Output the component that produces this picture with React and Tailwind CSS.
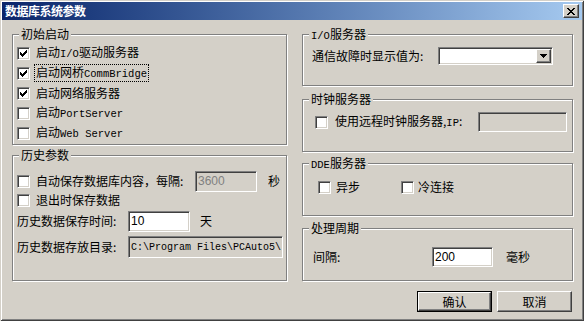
import React from 'react';

const sunken =
  'border border-t-[#808080] border-l-[#808080] border-b-white border-r-white shadow-[inset_1px_1px_0_#404040,inset_-1px_-1px_0_#d4d0c8]';
const raised =
  'border border-t-white border-l-white border-b-[#404040] border-r-[#404040] shadow-[inset_-1px_-1px_0_#808080,inset_1px_1px_0_#d4d0c8]';

function M({ children }) {
  return <span className="font-['Liberation_Mono',monospace] text-[10.5px]">{children}</span>;
}

function Check({ checked }) {
  return (
    <span className={`w-[13px] h-[13px] shrink-0 bg-white ${sunken}`}>
      {checked && (
        <svg width="11" height="11" viewBox="0 0 11 11" className="block" shapeRendering="crispEdges">
          <path
            fill="#000"
            d="M2 4h1v3h-1z M3 5h1v3h-1z M4 6h1v3h-1z M5 5h1v3h-1z M6 4h1v3h-1z M7 3h1v3h-1z M8 2h1v3h-1z"
          />
        </svg>
      )}
    </span>
  );
}

function Group({ title, className, children }) {
  return (
    <div className={`relative border border-[#808080] shadow-[inset_1px_1px_0_#fff,1px_1px_0_#fff] ${className}`}>
      <span className="absolute -top-[8px] left-[6px] px-[2px] bg-[#d4d0c8] leading-[14px] whitespace-nowrap">
        {title}
      </span>
      {children}
    </div>
  );
}

function CheckRow({ checked, focus, children }) {
  return (
    <div className="h-[20px] flex items-center">
      <Check checked={checked} />
      <span
        className={`ml-[5px] px-[1px] leading-[14px] whitespace-nowrap ${
          focus ? 'outline-1 outline-dotted outline-black' : ''
        }`}
      >
        {children}
      </span>
    </div>
  );
}

export default function App() {
  return (
    <div className="w-[584px] h-[321px] bg-[#d4d0c8] p-[2px] flex flex-col overflow-hidden text-[12px] text-black font-['Noto_Sans_CJK_SC',sans-serif] shadow-[inset_1px_1px_0_#d4d0c8,inset_-1px_-1px_0_#404040,inset_2px_2px_0_#fff,inset_-2px_-2px_0_#808080]">
      {/* Title bar */}
      <div className="h-[18px] shrink-0 flex items-center justify-between bg-gradient-to-r from-[#0a246a] to-[#a6caf0]">
        <span className="pl-[3px] text-white font-bold leading-[14px] tracking-[-0.5px]">数据库系统参数</span>
        <span className={`mr-[3px] w-[16px] h-[14px] bg-[#d4d0c8] flex items-center justify-center ${raised}`}>
          <svg width="8" height="7" viewBox="0 0 8 7" className="block" shapeRendering="crispEdges">
            <path
              fill="#000"
              d="M0 0h2v1h-2z M6 0h2v1h-2z M1 1h2v1h-2z M5 1h2v1h-2z M2 2h4v1h-4z M3 3h2v1h-2z M2 4h4v1h-4z M1 5h2v1h-2z M5 5h2v1h-2z M0 6h2v1h-2z M6 6h2v1h-2z"
            />
          </svg>
        </span>
      </div>

      {/* Body */}
      <div className="flex-1 flex pl-[10px] pt-[14px] gap-[15px]">
        {/* Left column */}
        <div className="w-[275px] flex flex-col">
          <Group title="初始启动" className="h-[111px] pl-[4px] pt-[8px]">
            <CheckRow checked>
              启动<M>I/O</M>驱动服务器
            </CheckRow>
            <CheckRow checked focus>
              启动网桥<M>CommBridge</M>
            </CheckRow>
            <CheckRow checked>启动网络服务器</CheckRow>
            <CheckRow>
              启动<M>PortServer</M>
            </CheckRow>
            <CheckRow>
              启动<M>Web Server</M>
            </CheckRow>
          </Group>

          <Group title="历史参数" className="mt-[10px] h-[126px] pl-[4px] pt-[14px]">
            <div className="h-[22px] flex items-center">
              <Check />
              <span className="ml-[6px] w-[159px] leading-[14px] whitespace-nowrap">自动保存数据库内容，每隔:</span>
              <span
                className={`w-[62px] h-[21px] flex items-center pl-[2px] text-[#808080] font-['Liberation_Sans',sans-serif] ${sunken}`}
              >
                3600
              </span>
              <span className="ml-[11px] leading-[14px]">秒</span>
            </div>
            <div className="h-[16px] flex items-center">
              <Check />
              <span className="ml-[6px] leading-[14px]">退出时保存数据</span>
            </div>
            <div className="mt-[2px] h-[22px] flex items-center">
              <span className="w-[111px] leading-[14px] whitespace-nowrap">历史数据保存时间:</span>
              <span
                className={`w-[62px] h-[21px] bg-white flex items-center pl-[2px] font-['Liberation_Sans',sans-serif] ${sunken}`}
              >
                10
              </span>
              <span className="ml-[10px] leading-[14px]">天</span>
            </div>
            <div className="mt-[4px] h-[22px] flex items-center">
              <span className="w-[111px] leading-[14px] whitespace-nowrap">历史数据存放目录:</span>
              <span
                className={`w-[155px] h-[22px] flex items-center pl-[2px] overflow-hidden whitespace-nowrap font-['Liberation_Mono',monospace] text-[10px] ${sunken}`}
              >
                C:\Program Files\PCAuto5\
              </span>
            </div>
          </Group>
        </div>

        {/* Right column */}
        <div className="w-[271px] flex flex-col">
          <Group
            title={
              <>
                <M>I/O</M>服务器
              </>
            }
            className="h-[52px] pl-[9px] pt-[12px]"
          >
            <div className="h-[18px] flex items-center">
              <span className="w-[126px] leading-[14px] whitespace-nowrap">通信故障时显示值为:</span>
              <span className={`w-[115px] h-[18px] bg-white flex justify-end items-center pr-[1px] ${sunken}`}>
                <span className={`w-[15px] h-[14px] bg-[#d4d0c8] flex items-center justify-center ${raised}`}>
                  <svg width="7" height="4" viewBox="0 0 7 4" className="block" shapeRendering="crispEdges">
                    <path fill="#000" d="M0 0h7v1h-7z M1 1h5v1h-5z M2 2h3v1h-3z M3 3h1v1h-1z" />
                  </svg>
                </span>
              </span>
            </div>
          </Group>

          <Group title="时钟服务器" className="mt-[13px] h-[53px] pl-[12px] pt-[12px]">
            <div className="h-[20px] flex items-center">
              <Check />
              <span className="ml-[7px] w-[143px] leading-[14px] whitespace-nowrap">
                使用远程时钟服务器,<M>IP</M>:
              </span>
              <span className={`w-[89px] h-[20px] ${sunken}`} />
            </div>
          </Group>

          <Group
            title={
              <>
                <M>DDE</M>服务器
              </>
            }
            className="mt-[11px] h-[53px] pl-[15px] pt-[15px]"
          >
            <div className="h-[16px] flex items-center">
              <div className="w-[83px] flex items-center">
                <Check />
                <span className="ml-[5px] leading-[14px]">异步</span>
              </div>
              <div className="flex items-center">
                <Check />
                <span className="ml-[4px] leading-[14px]">冷连接</span>
              </div>
            </div>
          </Group>

          <Group title="处理周期" className="mt-[12px] h-[53px] pl-[10px] pt-[18px]">
            <div className="h-[20px] flex items-center">
              <span className="w-[119px] leading-[14px]">间隔:</span>
              <span
                className={`w-[61px] h-[20px] bg-white flex items-center pl-[2px] font-['Liberation_Sans',sans-serif] ${sunken}`}
              >
                200
              </span>
              <span className="ml-[13px] leading-[14px]">毫秒</span>
            </div>
          </Group>

          <div className="mt-[10px] flex justify-end gap-[5px] pr-[1px]">
            <span className="w-[75px] h-[21px] border border-black flex">
              <span className={`flex-1 flex items-center justify-center leading-[14px] ${raised}`}>确认</span>
            </span>
            <span className={`w-[75px] h-[21px] flex items-center justify-center leading-[14px] ${raised}`}>取消</span>
          </div>
        </div>
      </div>
    </div>
  );
}
